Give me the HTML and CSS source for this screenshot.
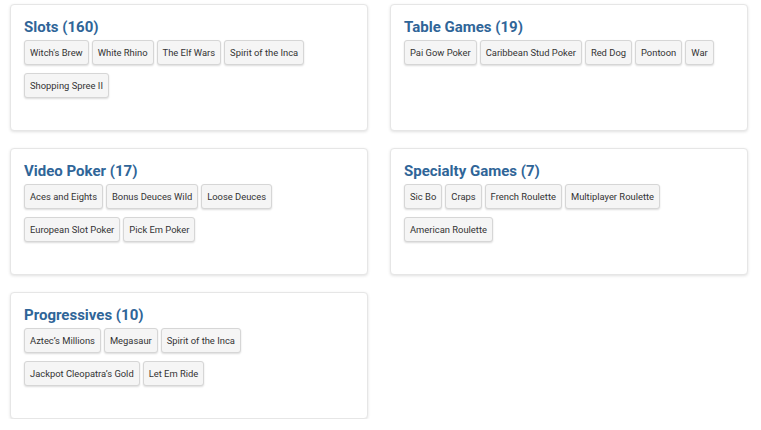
FILE: index.html
```html
<!DOCTYPE html>
<html>
<head>
<meta charset="utf-8">
<link rel="stylesheet" href="styles.css">
</head>
<body>
<div class="grid">
  <section class="card">
    <h2 class="title">Slots (160)</h2>
    <div class="chips">
      <span class="chip">Witch's Brew</span>
      <span class="chip">White Rhino</span>
      <span class="chip">The Elf Wars</span>
      <span class="chip">Spirit of the Inca</span>
      <span class="chip">Shopping Spree II</span>
    </div>
  </section>
  <section class="card">
    <h2 class="title">Table Games (19)</h2>
    <div class="chips">
      <span class="chip">Pai Gow Poker</span>
      <span class="chip">Caribbean Stud Poker</span>
      <span class="chip">Red Dog</span>
      <span class="chip">Pontoon</span>
      <span class="chip">War</span>
    </div>
  </section>
  <section class="card">
    <h2 class="title">Video Poker (17)</h2>
    <div class="chips">
      <span class="chip">Aces and Eights</span>
      <span class="chip">Bonus Deuces Wild</span>
      <span class="chip">Loose Deuces</span>
      <span class="chip">European Slot Poker</span>
      <span class="chip">Pick Em Poker</span>
    </div>
  </section>
  <section class="card">
    <h2 class="title">Specialty Games (7)</h2>
    <div class="chips">
      <span class="chip">Sic Bo</span>
      <span class="chip">Craps</span>
      <span class="chip">French Roulette</span>
      <span class="chip">Multiplayer Roulette</span>
      <span class="chip">American Roulette</span>
    </div>
  </section>
  <section class="card">
    <h2 class="title">Progressives (10)</h2>
    <div class="chips">
      <span class="chip">Aztec’s Millions</span>
      <span class="chip">Megasaur</span>
      <span class="chip">Spirit of the Inca</span>
      <span class="chip">Jackpot Cleopatra’s Gold</span>
      <span class="chip">Let Em Ride</span>
    </div>
  </section>
</div>
</body>
</html>
```
FILE: styles.css
```css
html, body {
  margin: 0;
  padding: 0;
  background: #ffffff;
  font-family: Roboto, "Liberation Sans", sans-serif;
}
.grid {
  display: grid;
  grid-template-columns: 358px 358px;
  column-gap: 22px;
  row-gap: 17px;
  padding: 4px 13px 0 10px;
}
.card {
  box-sizing: border-box;
  height: 127px;
  border: 1px solid #e6e6e6;
  border-radius: 4px;
  box-shadow: 0 1px 3px rgba(0,0,0,0.12);
  padding: 13px 13px 10px 13px;
  background: #fff;
}
.title {
  margin: 0 0 4px 0;
  font-size: 15px;
  line-height: 18px;
  font-weight: 700;
  color: #2f6598;
}
.chips {
  display: flex;
  flex-wrap: wrap;
  column-gap: 3px;
  row-gap: 8px;
}
.chip {
  box-sizing: border-box;
  height: 25px;
  line-height: 23px;
  padding: 0 5px;
  font-size: 9.4px;
  color: #333;
  background: #f5f5f5;
  border: 1px solid #d6d6d6;
  border-radius: 3px;
  box-shadow: 0 1px 2px rgba(0,0,0,0.14);
  white-space: nowrap;
}
```
